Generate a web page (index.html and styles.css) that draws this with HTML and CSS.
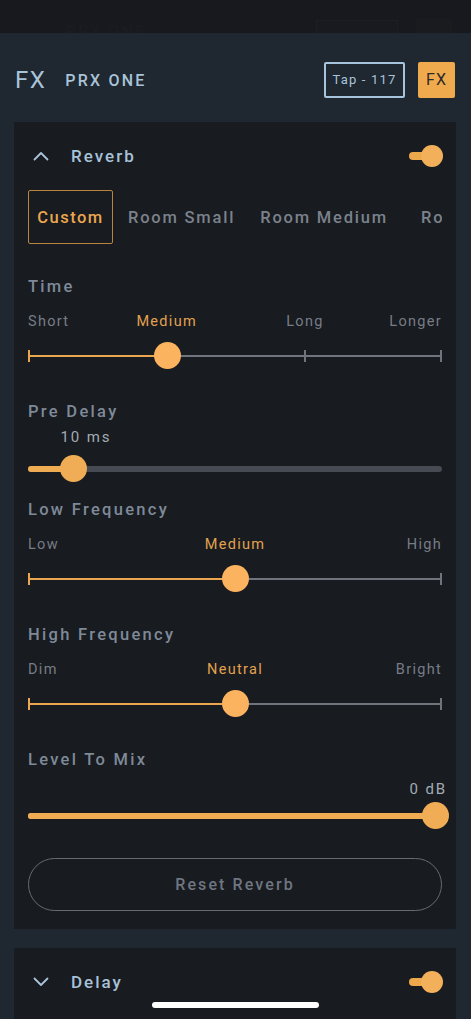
FILE: index.html
```html
<!DOCTYPE html>
<html>
<head>
<meta charset="utf-8">
<link rel="stylesheet" href="styles.css">
</head>
<body>
<div class="screen">
  <div class="statusbar">
    <div class="ghost ghost-text">PRX ONE</div>
    <div class="ghost ghost-box"></div>
    <div class="ghost ghost-sq"></div>
  </div>

  <div class="header">
    <div class="title">FX</div>
    <div class="device">PRX ONE</div>
    <div class="spacer"></div>
    <div class="tap">Tap - 117</div>
    <div class="fxbtn">FX</div>
  </div>

  <div class="card">
    <div class="sec-head">
      <svg class="chev" width="16" height="10" viewBox="0 0 16 10"><path d="M1.5 8.5 L8 2 L14.5 8.5" fill="none" stroke="#a9c3d8" stroke-width="1.8" stroke-linecap="round" stroke-linejoin="round"/></svg>
      <div class="sec-title">Reverb</div>
      <div class="spacer"></div>
      <div class="toggle"><div class="toggle-track"></div><div class="toggle-knob"></div></div>
    </div>

    <div class="presets">
      <div class="preset active">Custom</div>
      <div class="preset">Room Small</div>
      <div class="preset">Room Medium</div>
      <div class="preset preset-next">Room Large</div>
    </div>

    <div class="ctl-label first">Time</div>
    <div class="ticks">
      <span class="tk tk-left">Short</span>
      <span class="tk tk-mid on" style="left:33.5%">Medium</span>
      <span class="tk tk-mid" style="left:66.9%">Long</span>
      <span class="tk tk-right">Longer</span>
    </div>
    <div class="slider stepped">
      <div class="rail"></div>
      <div class="fill" style="width:33.8%"></div>
      <div class="tick tick-on" style="left:0"></div>
      <div class="tick" style="left:67%"></div>
      <div class="tick tick-end" style="left:100%"></div>
      <div class="thumb" style="left:33.8%"></div>
    </div>

    <div class="ctl-label">Pre Delay</div>
    <div class="value-row"><span class="value-float" style="left:14%">10 ms</span></div>
    <div class="slider thick">
      <div class="rail"></div>
      <div class="fill" style="width:11.1%"></div>
      <div class="thumb" style="left:11.1%"></div>
    </div>

    <div class="ctl-label close">Low Frequency</div>
    <div class="ticks">
      <span class="tk tk-left">Low</span>
      <span class="tk tk-mid on" style="left:50%">Medium</span>
      <span class="tk tk-right">High</span>
    </div>
    <div class="slider stepped">
      <div class="rail"></div>
      <div class="fill" style="width:50%"></div>
      <div class="tick tick-on" style="left:0"></div>
      <div class="tick tick-end" style="left:100%"></div>
      <div class="thumb" style="left:50%"></div>
    </div>

    <div class="ctl-label">High Frequency</div>
    <div class="ticks">
      <span class="tk tk-left">Dim</span>
      <span class="tk tk-mid on" style="left:50%">Neutral</span>
      <span class="tk tk-right">Bright</span>
    </div>
    <div class="slider stepped">
      <div class="rail"></div>
      <div class="fill" style="width:50%"></div>
      <div class="tick tick-on" style="left:0"></div>
      <div class="tick tick-end" style="left:100%"></div>
      <div class="thumb" style="left:50%"></div>
    </div>

    <div class="ctl-label">Level To Mix</div>
    <div class="value-row right"><span class="value-end">0 dB</span></div>
    <div class="slider thick full">
      <div class="rail"></div>
      <div class="fill" style="width:98.4%"></div>
      <div class="thumb" style="left:98.4%"></div>
    </div>

    <div class="reset">Reset Reverb</div>
  </div>

  <div class="card card-delay">
    <div class="sec-head">
      <svg class="chev" width="16" height="10" viewBox="0 0 16 10"><path d="M1.5 1.5 L8 8 L14.5 1.5" fill="none" stroke="#a9c3d8" stroke-width="1.8" stroke-linecap="round" stroke-linejoin="round"/></svg>
      <div class="sec-title">Delay</div>
      <div class="spacer"></div>
      <div class="toggle"><div class="toggle-track"></div><div class="toggle-knob"></div></div>
    </div>
  </div>

  <div class="home-indicator"></div>
</div>
</body>
</html>
```

FILE: styles.css
```css
* { box-sizing: border-box; }
html, body { margin: 0; padding: 0; }
body {
  background: #1f2731;
  font-family: Roboto, "Liberation Sans", sans-serif;
  width: 471px;
  height: 1019px;
  overflow: hidden;
}
.screen {
  position: relative;
  width: 471px;
  height: 1019px;
  overflow: hidden;
  background: #1f2731;
}
.statusbar {
  position: relative;
  height: 33px;
  background: #17191e;
  overflow: hidden;
}
.ghost { position: absolute; }
.ghost-text {
  left: 66px; top: 22px;
  font-size: 16px; letter-spacing: 2px;
  color: #191c21;
  font-weight: 500;
}
.ghost-box {
  left: 316px; top: 20px; width: 82px; height: 13px;
  border: 1px solid #1b1f25; border-bottom: none;
  background: #181a1f;
}
.ghost-sq {
  left: 416px; top: 19px; width: 36px; height: 14px;
  background: #1a1b1e;
}
.header {
  height: 89px;
  display: flex;
  align-items: center;
  padding: 4px 16px 0 15px;
}
.title {
  color: #a9c3d8;
  font-size: 24px;
  letter-spacing: 1.5px;
  font-weight: 400;
}
.device {
  color: #a9c3d8;
  font-size: 16px;
  letter-spacing: 2.2px;
  font-weight: 500;
  margin-left: 19px;
  margin-top: 2px;
}
.spacer { flex: 1; }
.tap {
  width: 81px;
  height: 36px;
  border: 2px solid #a6c4dd;
  border-radius: 2px;
  color: #a9c3d8;
  font-size: 13px;
  letter-spacing: 1.2px;
  display: flex;
  align-items: center;
  justify-content: center;
  font-weight: 400;
}
.fxbtn {
  width: 37px;
  height: 36px;
  margin-left: 13px;
  background: #f0aa4e;
  border-radius: 2px;
  color: #2b2a28;
  font-size: 16px;
  letter-spacing: 1px;
  display: flex;
  align-items: center;
  justify-content: center;
}
.card {
  margin: 0 15px 0 14px;
  background: #181b20;
  padding: 0 14px 18px 14px;
}
.sec-head {
  height: 68px;
  display: flex;
  align-items: center;
  padding-left: 5px;
}
.chev { display: block; }
.sec-title {
  color: #a8c2d8;
  font-size: 17px;
  letter-spacing: 2px;
  margin-left: 22px;
  font-weight: 500;
}
.toggle {
  position: relative;
  width: 34px;
  height: 22px;
  margin-right: -1px;
}
.toggle-track {
  position: absolute;
  left: 0; top: 7px;
  width: 22px; height: 8px;
  border-radius: 4px;
  background: #eea84c;
}
.toggle-knob {
  position: absolute;
  right: 0; top: 0;
  width: 22px; height: 22px;
  border-radius: 50%;
  background: #f3b05a;
}
.presets {
  display: flex;
  align-items: center;
  height: 54px;
  overflow: hidden;
  white-space: nowrap;
}
.preset {
  flex: none;
  color: #7b828c;
  font-size: 16.5px;
  letter-spacing: 1.8px;
  margin-right: 25px;
  font-weight: 500;
}
.preset-next { margin-left: 8px; }
.preset.active {
  width: 85px;
  height: 54px;
  border: 1px solid #b9843f;
  border-radius: 2px;
  color: #eba64f;
  display: flex;
  align-items: center;
  justify-content: center;
  margin-right: 15px;
  letter-spacing: 1.5px;
}
.ctl-label {
  color: #7f8a98;
  font-size: 16.5px;
  letter-spacing: 2.3px;
  line-height: 20px;
  margin-top: 32px;
  font-weight: 500;
}
.ctl-label.first { margin-top: 33px; }
.ctl-label.close { margin-top: 17px; }
.ticks {
  position: relative;
  height: 18px;
  margin-top: 16px;
  line-height: 18px;
  font-size: 14.5px;
  letter-spacing: 1.3px;
}
.tk { position: absolute; top: 0; color: #777d86; white-space: nowrap; }
.tk.on { color: #e3a24f; }
.tk-left { left: 0; }
.tk-right { right: 0; }
.tk-mid { transform: translateX(-50%); }
.slider {
  position: relative;
  height: 28px;
  margin-top: 11px;
}
.rail {
  position: absolute;
  left: 0; right: 0;
  top: 13px;
  height: 2px;
  background: #70757d;
}
.fill {
  position: absolute;
  left: 0;
  top: 13px;
  height: 2px;
  background: #eba64f;
}
.tick {
  position: absolute;
  top: 8px;
  width: 2px;
  height: 12px;
  margin-left: -1px;
  background: #70757d;
}
.tick-on { background: #eba64f; margin-left: 0; }
.tick-end { margin-left: -2px; }
.thumb {
  position: absolute;
  top: 0;
  width: 27px;
  height: 27px;
  margin-left: -13.5px;
  border-radius: 50%;
  background: #fbb35f;
}
.thick .rail {
  top: 11px;
  height: 6px;
  border-radius: 3px;
  background: #464b53;
}
.thick .fill {
  top: 11px;
  height: 6px;
  border-radius: 3px;
  background: #f0ac53;
}
.full .rail { background: #f0ac53; }
.thick .thumb { background: #f1ad55; }
.value-row {
  position: relative;
  height: 20px;
  margin-top: 5px;
  line-height: 20px;
  font-size: 15px;
  letter-spacing: 1.9px;
  color: #a4abb4;
}
.value-float { position: absolute; top: 0; transform: translateX(-50%); white-space: nowrap; }
.value-row + .slider { margin-top: 8px; }
.value-row.right { margin-top: 9px; }
.value-end { position: absolute; right: -5px; top: 0; }
.value-row.right + .slider { margin-top: 3px; }
.reset {
  margin-top: 28px;
  height: 53px;
  border: 1px solid #666b72;
  border-radius: 27px;
  display: flex;
  align-items: center;
  justify-content: center;
  color: #6f7680;
  font-size: 16px;
  letter-spacing: 2.1px;
  font-weight: 500;
}
.card-delay {
  margin-top: 19px;
  padding-bottom: 40px;
}
.home-indicator {
  position: absolute;
  left: 152px;
  top: 1002px;
  width: 167px;
  height: 6px;
  border-radius: 3px;
  background: #ffffff;
}
```
